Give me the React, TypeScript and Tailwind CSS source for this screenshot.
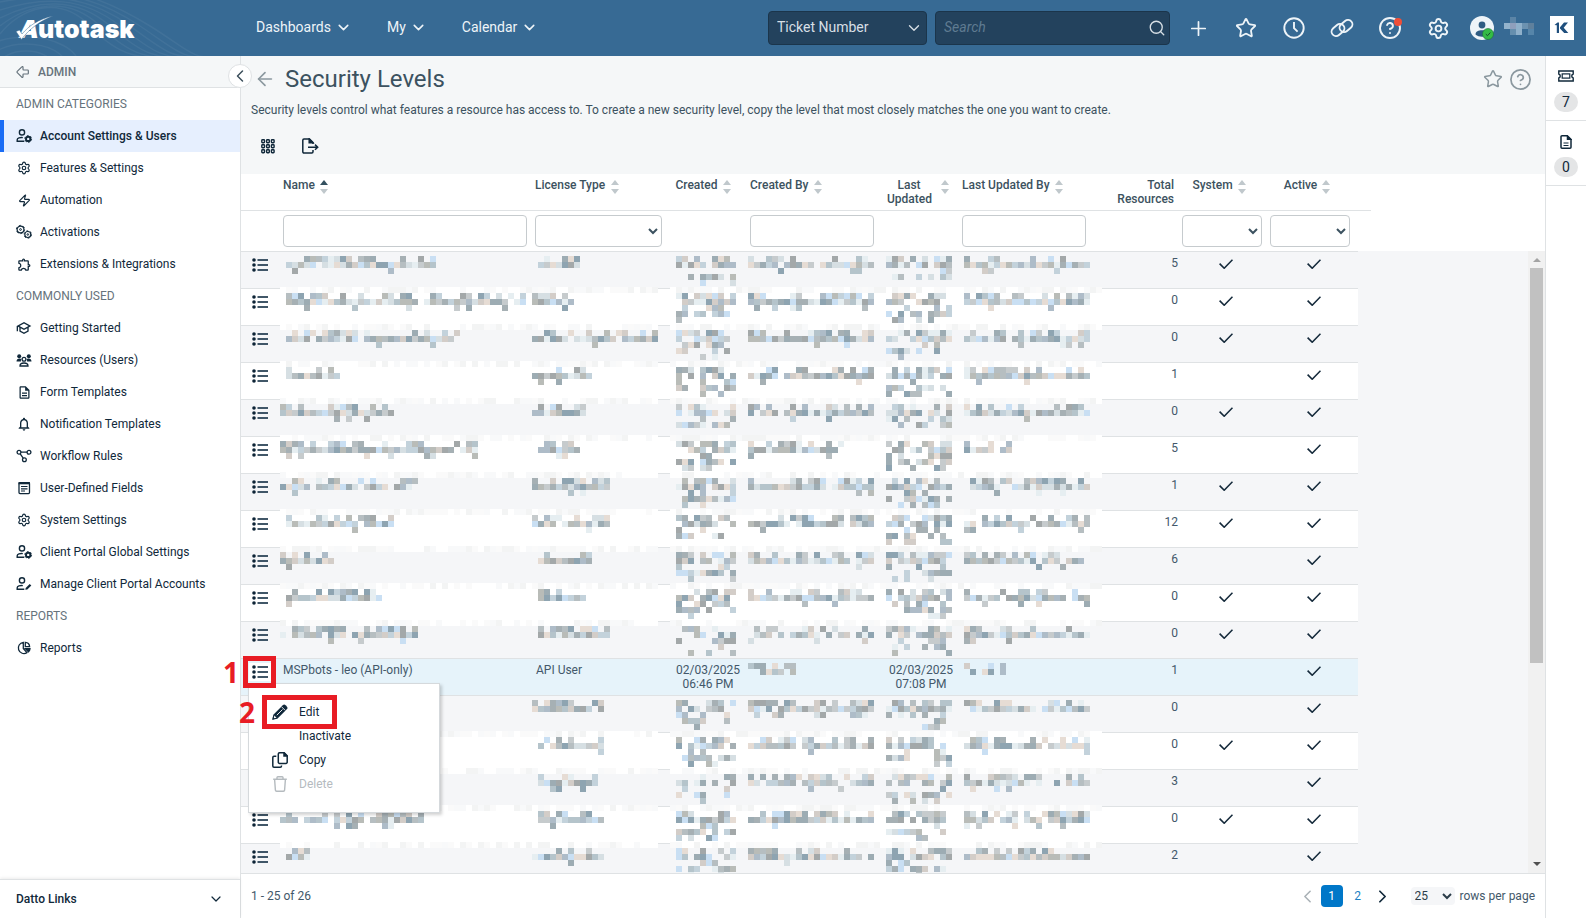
import type { ReactNode } from 'react';
import {
  ArrowBigLeft,
  ArrowLeft,
  ChevronDown,
  ChevronLeft,
  ChevronRight,
  CircleQuestionMark,
  Plus,
  Search,
  Settings,
  Star,
  Zap,
} from 'lucide-react';
import {
  MdNotificationsNone,
  MdOutlineDescription,
  MdOutlineExtension,
  MdOutlineSchool,
} from 'react-icons/md';

/* ---------- icons ---------- */

const GearsIcon = () => (
  <svg viewBox="0 0 16 16" className="size-4 overflow-visible" fill="none" stroke="currentColor">
    <circle cx="4.5" cy="5.5" r="3.4" strokeWidth="1.2" />
    <circle cx="4.5" cy="5.5" r="4.1" strokeWidth="1" strokeDasharray="2.1 2.2" />
    <circle cx="4.5" cy="5.5" r="0.9" />
    <circle cx="11.8" cy="10.5" r="3" strokeWidth="1.2" />
    <circle cx="11.8" cy="10.5" r="3.7" strokeWidth="1" strokeDasharray="1.9 1.97" />
    <circle cx="11.8" cy="10.5" r="0.8" />
  </svg>
);

const UserGearIcon = () => (
  <svg viewBox="0 0 16 16" className="size-4 overflow-visible" fill="none" stroke="currentColor" strokeWidth="1.4">
    <circle cx="6" cy="4.4" r="2.6" />
    <path d="M8.3 13.3H1.2v-1.5c0-1.7 2.8-2.6 5.6-2.2" />
    <circle cx="12.2" cy="10.9" r="2.2" strokeWidth="2" />
    <circle cx="12.2" cy="10.9" r="3.4" strokeWidth="1" strokeDasharray="1.7 1.86" />
  </svg>
);

const PeopleIcon = () => (
  <svg viewBox="0 0 16 16" className="size-4" fill="currentColor">
    <circle cx="3.2" cy="4.2" r="2" />
    <circle cx="12.8" cy="4.2" r="2" />
    <path d="M.5 9.6c0-2 1.2-3 3-3 .8 0 1.5.2 2 .6-.5.7-.8 1.5-.6 2.4zM15.5 9.6c0-2-1.2-3-3-3-.8 0-1.5.2-2 .6.5.7.8 1.5.6 2.4z" />
    <circle cx="8" cy="7.2" r="1.9" fill="none" stroke="currentColor" strokeWidth="1.3" />
    <path d="M4 14c0-2 1.6-3 4-3s4 1 4 3z" fill="none" stroke="currentColor" strokeWidth="1.3" />
  </svg>
);

const WorkflowIcon = () => (
  <svg viewBox="0 0 16 16" className="size-4" fill="none" stroke="currentColor" strokeWidth="1.3">
    <circle cx="3" cy="4.2" r="1.9" />
    <circle cx="13" cy="4.2" r="1.9" />
    <circle cx="8.4" cy="11.8" r="1.9" />
    <path d="M5 4.2h6M4.2 5.8l3 4.4" />
  </svg>
);

const FieldsIcon = () => (
  <svg viewBox="0 0 16 16" className="size-4" fill="none" stroke="currentColor" strokeWidth="1.3">
    <rect x="3" y="2.6" width="10.5" height="11" rx="1" />
    <path d="M2.5 3.2h11.5" strokeWidth="2.2" />
    <path d="M5 6.5h6.5M5 8.8h6.5M5 11h4" strokeWidth="1.2" />
  </svg>
);

const UserEditIcon = () => (
  <svg viewBox="0 0 16 16" className="size-4" fill="none" stroke="currentColor" strokeWidth="1.4">
    <circle cx="6" cy="4.4" r="2.6" />
    <path d="M8.3 13.3H1.2v-1.5c0-1.7 2.8-2.6 5.6-2.2" />
    <path d="M9.3 13.7l.4-1.8 4-4 1.6 1.6-4 4z" fill="currentColor" stroke="none" />
  </svg>
);

const PieIcon = () => (
  <svg viewBox="0 0 16 16" className="size-4" fill="none" stroke="currentColor" strokeWidth="1.3">
    <path d="M7.3 2.4a5.6 5.6 0 1 0 3.6 10.3L7.3 8.5z" />
    <path d="M9.3 2.3v4.3h4.3a4.6 4.6 0 0 0-4.3-4.3z" />
    <path d="M9.3 8.6h4.7a5 5 0 0 1-1.5 3.2z" fill="currentColor" />
  </svg>
);

const GridIcon = () => (
  <svg viewBox="0 0 14 15" className="h-[15px] w-3.5" fill="none" stroke="currentColor" strokeWidth="1.4">
    {[0.8, 5.8, 10.8].map((y) =>
      [0.8, 5.6, 10.4].map((x) => (
        <rect key={`${x}-${y}`} x={x} y={y} width="2.7" height="2.9" rx="0.7" />
      )),
    )}
  </svg>
);

const ExportIcon = () => (
  <svg viewBox="0 0 17 16" className="h-4 w-[17px]" fill="none" stroke="currentColor" strokeWidth="1.5">
    <path d="M11 12v1.8a1.2 1.2 0 0 1-1.2 1.2H2A1.2 1.2 0 0 1 .8 13.8V2.2A1.2 1.2 0 0 1 2 1h5.5L11 4.5v1.500" />
    <path d="M7.2 1v3.7h3.7z" fill="currentColor" />
    <path d="M6 9.2h9.5M13 6.6l2.7 2.6-2.7 2.6" />
  </svg>
);

const LinkIcon = () => (
  <svg viewBox="0 0 24 24" className="size-6 overflow-visible" fill="none" stroke="currentColor" strokeWidth="1.9">
    <rect x="-7" y="-4.5" width="14" height="9" rx="4.5" transform="translate(8 14) rotate(-40)" />
    <rect x="-7" y="-4.5" width="14" height="9" rx="4.5" transform="translate(16 10) rotate(-40)" />
  </svg>
);

const TicketIcon = () => (
  <svg viewBox="0 0 16 12" className="h-3 w-4" fill="none" stroke="currentColor" strokeWidth="1.4">
    <path d="M.8 1h14.4v3a2.1 2.1 0 0 0 0 4v3H.8V8a2.1 2.1 0 0 0 0-4z" />
    <rect x="4.2" y="3.9" width="7.6" height="4.2" strokeWidth="1.2" />
  </svg>
);

const DocIcon = () => (
  <svg viewBox="0 0 12 14" className="h-3.5 w-3" fill="none" stroke="currentColor" strokeWidth="1.5">
    <path d="M1 1.8A1 1 0 0 1 2 .8h5L11 4.6v7.6a1 1 0 0 1-1 1H2a1 1 0 0 1-1-1z" />
    <path d="M7.5 1v3.3h3.3z" fill="currentColor" />
    <path d="M3.5 8h5M3.5 10.5h5" strokeWidth="1.2" />
  </svg>
);

const ListIcon = () => (
  <svg viewBox="0 0 16 14" className="h-3.5 w-4" fill="#0d2436">
    {[2, 7, 12].map((y) => (
      <g key={y}>
        <circle cx="2" cy={y} r="1.8" />
        <rect x="5.5" y={y - 0.9} width="10.5" height="1.8" fill="#2d4558" />
      </g>
    ))}
  </svg>
);

const CheckIcon = () => (
  <svg viewBox="0 0 14 10" className="mx-auto mt-[3px] h-2.5 w-3.5" fill="none" stroke="#14293a" strokeWidth="1.6">
    <path d="M.6 4.6l4.6 4.600L13.5.7" />
  </svg>
);

const PencilIcon = () => (
  <svg viewBox="0 0 16 16" className="size-4" fill="currentColor">
    <path d="M.3 15.7l1-5L10.8 1.3a2 2 0 0 1 2.8 0l1.2 1.2a2 2 0 0 1 0 2.8L5.3 14.7z" />
    <path d="M4.8 11.2l5.7-5.7M9.8 3l3.3 3.3" stroke="#fff" strokeWidth="0.9" />
    <path d="M2.3 11.6l2.2 2.2-2.6.5z" fill="#fff" />
    <path d="M.3 15.7l.6-2.4 1.8 1.8z" />
  </svg>
);

const CopyIcon = () => (
  <svg viewBox="0 0 16 16" className="size-4" fill="none" stroke="currentColor" strokeWidth="1.5">
    <path d="M6.3 2A1.2 1.2 0 0 1 7.5.8h4.7l3 3v6.4a1.2 1.2 0 0 1-1.2 1.2H7.5a1.2 1.2 0 0 1-1.2-1.2z" />
    <path d="M12 1v3h3z" fill="currentColor" />
    <path d="M4.3 4.2H2A1.2 1.2 0 0 0 .8 5.4V14A1.2 1.2 0 0 0 2 15.2h6.3A1.2 1.2 0 0 0 9.5 14v-.6" />
  </svg>
);

const TrashIcon = () => (
  <svg viewBox="0 0 16 16" className="size-4" fill="none" stroke="currentColor" strokeWidth="1.4">
    <path d="M1.2 3.2h13.6M5 3V1.5A.8.8 0 0 1 5.8.7h4.4a.8.8 0 0 1 .8.8V3M2.6 3.4l.8 10.7a1.2 1.2 0 0 0 1.2 1.1h6.8a1.2 1.2 0 0 0 1.2-1.1l.8-10.7" />
  </svg>
);

const Sorter = ({ asc = false }: { asc?: boolean }) => (
  <svg viewBox="0 0 8 14" className="mt-0.5 h-3.5 w-2 shrink-0" fill="#c0c8cc">
    <path d="M0 5l4-5 4 5z" fill={asc ? '#33505f' : '#c0c8cc'} />
    <path d="M0 9l4 5 4-5z" />
  </svg>
);

/* ---------- redacted text ---------- */

const TONES = [
  '#a6b0b4', '#b6bec1', '#c6cbcd', '#aebcc8', '#9dacb3', '#c3d2db', '#d6dfe3', '#c9dff3',
  '#e6dcd4', '#b9bcb8', '#8ea4b1', '#e6eef1', '#d3cdc8', '#b5c4cb', '#a3a8a9',
];
const FAINT = ['#ffffff', '#ffffff', '#fafafa', '#f3f4f4', '#f8f9fa'];

const random = (seed: number) => {
  let s = seed * 7919 + 13;
  return () => {
    s = (s * 1103515245 + 12345) % 2147483648;
    return s / 2147483648;
  };
};

const DENSITY = {
  text: [0.5, 0.94, 0.12],
  date: [0.65, 0.8, 0.3, 0.65, 0.25],
  sparse: [0.5, 0.4],
};

interface IMosaic {
  seed: number;
  from?: number;
  count: number;
  kind?: keyof typeof DENSITY;
  span: number;
  edge?: boolean;
  className: string;
}

// 6px blocks standing in for hidden values; `span` is the cell width in blocks
const Mosaic = ({ seed, from = 0, count, kind = 'text', span, edge = true, className }: IMosaic) => {
  const next = random(seed);
  for (let i = 0; i < 5; i++) next();
  const blocks: ReactNode[] = [];

  if (edge) {
    for (let x = -1; x < span; x++) {
      blocks.push(
        <rect key={`e${x}`} x={x * 6} y={0} width="6" height="6" fill={FAINT[Math.floor(next() * FAINT.length)]} />,
      );
    }
  }
  DENSITY[kind].forEach((density, row) => {
    for (let x = from; x < from + count; x++) {
      const shown = next() < density;
      const tone = TONES[Math.floor(next() * TONES.length)];
      if (shown) {
        blocks.push(<rect key={`${row}-${x}`} x={x * 6} y={6 + row * 6} width="6" height="6" fill={tone} />);
      }
    }
  });

  return (
    <svg
      className={`absolute -top-0.5 h-9 w-full overflow-visible ${className}`}
      shapeRendering="crispEdges"
      aria-hidden="true"
    >
      {blocks}
    </svg>
  );
};

/* ---------- data ---------- */

interface IRow {
  name: [number, number];
  license: [number, number];
  by?: number;
  updatedBy?: number;
  total: number;
  system: boolean;
}

const rows: IRow[] = [
  { name: [0, 25], license: [1, 7], total: 5, system: true },
  { name: [0, 40], license: [0, 8], total: 0, system: true },
  { name: [0, 29], license: [0, 21], total: 0, system: true },
  { name: [0, 9], license: [0, 10], total: 1, system: false },
  { name: [-1, 19], license: [0, 10], total: 0, system: true },
  { name: [-1, 33], license: [1, 7], by: 16, updatedBy: 8, total: 5, system: false },
  { name: [-1, 23], license: [0, 14], total: 1, system: true },
  { name: [0, 18], license: [0, 13], total: 12, system: true },
  { name: [-1, 9], license: [1, 9], total: 6, system: false },
  { name: [0, 16], license: [1, 8], total: 0, system: true },
  { name: [-1, 23], license: [1, 12], total: 0, system: true },
  { name: [0, 0], license: [0, 0], by: 8, updatedBy: 7, total: 1, system: false },
  { name: [0, 10], license: [0, 12], total: 0, system: false },
  { name: [0, 12], license: [1, 11], total: 0, system: true },
  { name: [0, 10], license: [1, 10], total: 3, system: false },
  { name: [-1, 24], license: [1, 11], total: 0, system: true },
  { name: [0, 4], license: [0, 12], total: 2, system: false },
];
const OPEN_ROW = 11;

interface INavItem {
  label: string;
  icon: ReactNode;
}

const sections: { title: string; items: INavItem[] }[] = [
  {
    title: 'ADMIN CATEGORIES',
    items: [
      { label: 'Account Settings & Users', icon: <UserGearIcon /> },
      { label: 'Features & Settings', icon: <Settings size={14} strokeWidth={2} /> },
      { label: 'Automation', icon: <Zap size={13} strokeWidth={2.2} /> },
      { label: 'Activations', icon: <GearsIcon /> },
      { label: 'Extensions & Integrations', icon: <MdOutlineExtension size={15} /> },
    ],
  },
  {
    title: 'COMMONLY USED',
    items: [
      { label: 'Getting Started', icon: <MdOutlineSchool size={16} className="-scale-x-100" /> },
      { label: 'Resources (Users)', icon: <PeopleIcon /> },
      { label: 'Form Templates', icon: <MdOutlineDescription size={15} /> },
      { label: 'Notification Templates', icon: <MdNotificationsNone size={16} /> },
      { label: 'Workflow Rules', icon: <WorkflowIcon /> },
      { label: 'User-Defined Fields', icon: <FieldsIcon /> },
      { label: 'System Settings', icon: <Settings size={14} strokeWidth={2} /> },
      { label: 'Client Portal Global Settings', icon: <UserGearIcon /> },
      { label: 'Manage Client Portal Accounts', icon: <UserEditIcon /> },
    ],
  },
  { title: 'REPORTS', items: [{ label: 'Reports', icon: <PieIcon /> }] },
];

/* ---------- header ---------- */

const Logo = () => (
  <svg viewBox="0 -6 132 40" className="h-10 w-[132px]" fill="#fff" role="img" aria-label="Autotask">
    <text x="3" y="24" fontFamily="Inter, sans-serif" fontWeight="900" fontStyle="italic" fontSize="25">
      A
    </text>
    <text x="22" y="24" fontFamily="Inter, sans-serif" fontWeight="900" fontSize="25">
      utotask
    </text>
    <path d="M0 17.5l3.5-1.5 2.5 4C13 12 22 5 37 2 24 7 13 15 5.5 25.5z" stroke="#376a94" strokeWidth="0.5" />
  </svg>
);

const HeaderWaves = () => (
  <svg
    className="pointer-events-none absolute left-0 top-0 h-full w-[220px]"
    fill="none"
    stroke="#fff"
    strokeOpacity="0.05"
    strokeWidth="1.5"
  >
    {[0, 1, 2, 3, 4, 5, 6].map((i) => (
      <path
        key={i}
        d={`M0 ${34 - i * 8}C${20 + i * 8} ${8 - i * 4} ${60 + i * 8} ${-6 + i} ${90 + i * 10} 26S${140 + i * 8} 58 ${175 + i * 8} 58`}
      />
    ))}
    {[0, 1, 2, 3].map((i) => (
      <ellipse key={i} cx="26" cy="66" rx={14 + i * 13} ry={8 + i * 7} />
    ))}
  </svg>
);

const iconButton = 'flex size-6 items-center justify-center';

const Header = () => (
  <header className="relative flex h-14 shrink-0 items-center bg-[#376a94] pl-4 pr-3 text-sm text-[#eef4f8]">
    <HeaderWaves />
    <div className="relative w-60">
      <Logo />
    </div>
    <nav className="flex items-center gap-[35px] pb-0.5">
      {['Dashboards', 'My', 'Calendar'].map((label) => (
        <button key={label} type="button" className="flex items-center gap-1">
          {label}
          <ChevronDown size={17} strokeWidth={2.2} />
        </button>
      ))}
    </nav>
    <div className="ml-auto flex items-center gap-2">
      <div className="relative">
        <select
          aria-label="Search by"
          className="block h-[34px] w-[159px] appearance-none rounded border border-[#1b354b] bg-[#23425d] px-2 pb-0.5 text-[#d7dfe5]"
        >
          <option>Ticket Number</option>
        </select>
        <ChevronDown
          className="pointer-events-none absolute right-1 top-2 text-[#d7dfe5]"
          size={18}
          strokeWidth={1.8}
        />
      </div>
      <div className="flex h-[34px] w-[235px] items-center rounded border border-[#1b354b] bg-[#23425d] px-[3px] text-[#d7dfe5]">
        <input
          aria-label="Search"
          placeholder="Search"
          className="min-w-0 flex-1 bg-transparent px-[5px] pb-0.5 outline-none placeholder:italic placeholder:text-[#5f7b91]"
        />
        <button type="button" aria-label="Run search">
          <Search size={18} strokeWidth={1.8} />
        </button>
      </div>
    </div>
    <div className="ml-4 flex items-center gap-6">
      <button type="button" aria-label="New" className={iconButton}>
        <Plus size={23} strokeWidth={1.8} />
      </button>
      <button type="button" aria-label="Favorites" className={iconButton}>
        <Star size={22} strokeWidth={2} strokeLinejoin="miter" />
      </button>
      <button type="button" aria-label="Recent" className={iconButton}>
        <svg viewBox="0 0 22 22" className="size-[22px]" fill="none" stroke="currentColor" strokeWidth="1.9">
          <circle cx="11" cy="11" r="9.7" />
          <path d="M11 5v6.2l3.6 3.4" />
        </svg>
      </button>
      <button type="button" aria-label="Links" className={iconButton}>
        <LinkIcon />
      </button>
      <button type="button" aria-label="Help" className={`relative ${iconButton}`}>
        <CircleQuestionMark size={24} strokeWidth={1.9} />
        <span className="absolute right-0 top-0.5 size-2 rounded-full bg-[#f04e37]" />
      </button>
      <button type="button" aria-label="Settings" className={iconButton}>
        <Settings size={23} strokeWidth={2} />
      </button>
    </div>
    <div className="ml-5 flex items-center">
      <button type="button" aria-label="Profile" className="relative size-6">
        <svg viewBox="0 0 24 24" className="size-6 overflow-visible">
          <circle cx="12" cy="12" r="12" fill="#eef4f8" />
          <circle cx="12" cy="9" r="3.4" fill="#2f5c82" />
          <path d="M5.5 18.5c0-3 3-4.3 6.5-4.3s6.5 1.3 6.5 4.3c-3.5 3-9.5 3-13 0z" fill="#2f5c82" />
          <circle cx="18" cy="18" r="5.5" fill="#34bb45" stroke="#1f6d3a" strokeWidth="0.6" />
          <path d="M15.8 18.1l1.7 1.6 2.8-3.1" fill="none" stroke="#17492a" />
        </svg>
      </button>
      <svg viewBox="0 0 30 18" className="mb-1 ml-2.5 h-[18px] w-[30px]" shapeRendering="crispEdges" aria-hidden="true">
        <rect x="0" y="6" width="6" height="6" fill="#93b3cc" />
        <rect x="6" y="0" width="6" height="6" fill="#5b84a6" />
        <rect x="6" y="6" width="6" height="6" fill="#8f9fbc" />
        <rect x="6" y="12" width="6" height="6" fill="#668fae" />
        <rect x="12" y="6" width="6" height="12" fill="#8fb0ca" />
        <rect x="18" y="6" width="6" height="6" fill="#6c92b0" />
        <rect x="24" y="6" width="6" height="6" fill="#5f809c" />
        <rect x="24" y="12" width="6" height="6" fill="#5685a9" />
      </svg>
      <svg viewBox="0 0 24 24" className="ml-4 size-6" role="img" aria-label="Kaseya One">
        <rect width="24" height="24" fill="#fff" />
        <path d="M4.5 9l3-2.5H9V17H6.8V9.2zM10 11.2L14 6.5h4L13.7 11.7 18.3 17h-4.1L10 12.5z" fill="#1f4f7d" />
      </svg>
    </div>
  </header>
);

/* ---------- sidebar ---------- */

const Sidebar = () => (
  <aside className="relative flex w-[241px] shrink-0 flex-col border-r border-[#dfe2e4] bg-white text-xs text-[#10283a]">
    <a
      href="#admin"
      className="flex h-8 items-center gap-[7px] border-b border-[#dfe2e4] bg-[#f5f7f8] pl-[15px] font-medium text-[#66737c]"
    >
      <ArrowBigLeft size={16} strokeWidth={1.8} />
      ADMIN
    </a>
    <button
      type="button"
      aria-label="Collapse menu"
      className="absolute -right-3 top-2 z-10 flex size-6 items-center justify-center rounded-full border border-[#dfe2e4] bg-white text-[#3c4f5b]"
    >
      <ChevronLeft size={20} strokeWidth={1.8} />
    </button>
    <nav className="flex-1">
      {sections.map(({ title, items }) => (
        <div key={title}>
          <h2 className="flex h-8 items-center pl-4 text-[#66737c]">{title}</h2>
          <ul>
            {items.map(({ label, icon }, index) => {
              const active = title === 'ADMIN CATEGORIES' && index === 0;
              return (
                <li key={label}>
                  <a
                    href="#category"
                    className={`flex h-8 items-center gap-2 border-l-4 pl-3 ${
                      active ? 'border-[#1a6cf5] bg-[#e6effe] font-medium' : 'border-transparent'
                    }`}
                  >
                    <span className="flex size-4 items-center justify-center">{icon}</span>
                    {label}
                  </a>
                </li>
              );
            })}
          </ul>
        </div>
      ))}
    </nav>
    <button
      type="button"
      className="flex h-[39px] items-center justify-between border-t border-[#dfe2e4] px-4 font-medium shadow-[0_-1px_3px_rgba(0,0,0,0.08)]"
    >
      Datto Links
      <ChevronDown size={16} strokeWidth={1.8} />
    </button>
  </aside>
);

/* ---------- grid ---------- */

const filterBox = 'block h-8 w-full rounded border border-[#c6cbce] bg-white';

const GridHead = () => (
  <table className="w-[1130px] table-fixed text-xs leading-[14px] text-[#3c5260]">
    <colgroup>
      <col className="w-[38px]" />
      <col className="w-[252px]" />
      <col className="w-[135px]" />
      <col className="w-20" />
      <col className="w-[132px]" />
      <col className="w-20" />
      <col className="w-[132px]" />
      <col className="w-[88px]" />
      <col className="w-[88px]" />
      <col className="w-[88px]" />
      <col className="w-[17px]" />
    </colgroup>
    <thead>
      <tr className="h-9 border-b border-[#dfe2e4] align-top [&>th]:px-1 [&>th]:pt-1 [&>th]:font-medium">
        <th />
        <th>
          <div className="flex gap-[5px]">
            Name <Sorter asc />
          </div>
        </th>
        <th>
          <div className="flex gap-1.5">
            License Type <Sorter />
          </div>
        </th>
        <th>
          <div className="flex justify-center gap-[5px] pr-1.5">
            Created <Sorter />
          </div>
        </th>
        <th>
          <div className="flex gap-1.5">
            Created By <Sorter />
          </div>
        </th>
        <th>
          <div className="flex justify-center gap-2.5">
            <span className="w-11">Last Updated</span> <Sorter />
          </div>
        </th>
        <th>
          <div className="flex gap-[5px]">
            Last Updated By <Sorter />
          </div>
        </th>
        <th className="text-right">
          Total
          <br />
          Resources
        </th>
        <th>
          <div className="flex justify-center gap-[5px] pr-1.5">
            System <Sorter />
          </div>
        </th>
        <th>
          <div className="flex justify-center gap-[5px] pr-1.5">
            Active <Sorter />
          </div>
        </th>
        <th />
      </tr>
      <tr className="h-[41px] [&>td]:px-1">
        <td />
        <td>
          <input aria-label="Filter by name" className={filterBox} />
        </td>
        <td>
          <select aria-label="Filter by license type" className={filterBox} />
        </td>
        <td />
        <td>
          <input aria-label="Filter by creator" className={filterBox} />
        </td>
        <td />
        <td>
          <input aria-label="Filter by last editor" className={filterBox} />
        </td>
        <td />
        <td>
          <select aria-label="Filter by system" className={filterBox} />
        </td>
        <td>
          <select aria-label="Filter by active" className={filterBox} />
        </td>
        <td />
      </tr>
    </thead>
  </table>
);

const RowMenu = () => (
  <div className="absolute left-[7px] top-6 z-20 flex h-[130px] w-48 flex-col border border-[#d5d9dc] bg-white py-4 text-[#10283a] shadow-[2px_2px_3px_rgba(0,0,0,0.18)]">
    {[
      { label: 'Edit', icon: <PencilIcon /> },
      { label: 'Inactivate', icon: null },
      { label: 'Copy', icon: <CopyIcon /> },
      { label: 'Delete', icon: <TrashIcon />, disabled: true },
    ].map(({ label, icon, disabled }) => (
      <button
        key={label}
        type="button"
        disabled={disabled}
        className="flex h-6 items-center gap-[11px] pl-[23px] disabled:text-[#b5bbbf]"
      >
        <span className="size-4">{icon}</span>
        {label}
      </button>
    ))}
  </div>
);

const GridRow = ({ row, index }: { row: IRow; index: number }) => {
  const open = index === OPEN_ROW;
  // the row after the open one keeps its divider visible
  const edge = !open && index !== OPEN_ROW + 1 && index !== 0;
  const kind = open ? 'sparse' : 'text';
  const seed = index * 10 + 1;

  return (
    <tr
      className={`h-[37px] border-b border-[#dfe2e4] align-top [&>td]:relative [&>td]:px-1 [&>td]:pt-1 ${
        open ? 'bg-[#e6f3fa]' : index % 2 ? 'bg-white' : 'bg-[#f5f6f8]'
      }`}
    >
      <td>
        <button
          type="button"
          aria-label="Row actions"
          className={`ml-1 block px-[3px] py-0.5 ${open ? 'bg-white' : ''}`}
        >
          <ListIcon />
        </button>
        {open && <RowMenu />}
      </td>
      {open ? (
        <>
          <td>MSPbots - leo (API-only)</td>
          <td>API User</td>
          <td className="text-center">
            02/03/2025
            <br />
            06:46 PM
          </td>
        </>
      ) : (
        <>
          <td>
            <Mosaic className="left-[7px]" seed={seed} from={row.name[0]} count={row.name[1]} span={42} edge={edge} />
          </td>
          <td>
            <Mosaic
              className="left-0"
              seed={seed + 1}
              from={row.license[0]}
              count={row.license[1]}
              span={21}
              edge={edge}
            />
          </td>
          <td>
            <Mosaic className="left-2" seed={seed + 2} count={10} kind="date" span={12} edge={edge} />
          </td>
        </>
      )}
      <td>
        <Mosaic className="left-0" seed={seed + 3} count={row.by ?? 21} kind={kind} span={22} edge={edge} />
      </td>
      {open ? (
        <td className="text-center">
          02/03/2025
          <br />
          07:08 PM
        </td>
      ) : (
        <td>
          <Mosaic className="left-[5px]" seed={seed + 4} count={11} kind="date" span={13} edge={edge} />
        </td>
      )}
      <td>
        <Mosaic className="left-[3px]" seed={seed + 5} count={row.updatedBy ?? 21} kind={kind} span={23} edge={edge} />
      </td>
      <td className="text-right">{row.total}</td>
      <td>{row.system && <CheckIcon />}</td>
      <td>
        <CheckIcon />
      </td>
    </tr>
  );
};

const GridBody = () => (
  <div className="flex min-h-0 flex-1 border-b border-[#dfe2e4] bg-[#f5f6f8]">
    <div className="min-w-0 flex-1 overflow-hidden">
      <table className="w-[1117px] table-fixed border-t border-[#dfe2e4] text-xs leading-[14px] text-[#43586a]">
        <colgroup>
          <col className="w-[38px]" />
          <col className="w-[253px]" />
          <col className="w-[136px]" />
          <col className="w-20" />
          <col className="w-[133px]" />
          <col className="w-20" />
          <col className="w-[133px]" />
          <col className="w-[88px]" />
          <col className="w-[88px]" />
          <col className="w-[88px]" />
        </colgroup>
        <tbody>
          {rows.map((row, index) => (
            <GridRow key={index} row={row} index={index} />
          ))}
        </tbody>
      </table>
    </div>
    <div className="flex w-[17px] flex-col items-center bg-[#f1f1f1] pb-[7px] pt-[7px]" aria-hidden="true">
      <svg viewBox="0 0 8 4" className="h-1 w-2" fill="#a3a3a3">
        <path d="M0 4l4-4 4 4z" />
      </svg>
      <div className="mt-1.5 h-[395px] w-[13px] bg-[#c1c1c1]" />
      <svg viewBox="0 0 8 4" className="mt-auto h-1 w-2" fill="#505050">
        <path d="M0 0l4 4 4-4z" />
      </svg>
    </div>
  </div>
);

const Pagination = () => (
  <footer className="flex h-11 shrink-0 items-center bg-white px-2.5 text-xs text-[#43586a]">
    <span>1 - 25 of 26</span>
    <div className="ml-auto flex items-center">
      <button type="button" aria-label="Previous page" disabled className="text-[#a9b1b6]">
        <ChevronLeft size={21} strokeWidth={1.8} />
      </button>
      <button type="button" className="ml-[3px] size-[22px] rounded bg-[#0077c8] text-white">
        1
      </button>
      <button type="button" className="ml-1 size-[22px] text-[#1b7fc4]">
        2
      </button>
      <button type="button" aria-label="Next page" className="ml-[3px] text-[#10283a]">
        <ChevronRight size={21} strokeWidth={2} />
      </button>
      <label className="ml-[18px] flex items-center gap-[5px]">
        <select defaultValue="25" className="h-[18px] w-11 rounded bg-[#f5f6f8] text-[#2b3d49]">
          <option>25</option>
          <option>50</option>
        </select>
        rows per page
      </label>
    </div>
  </footer>
);

/* ---------- page ---------- */

const RightRail = () => (
  <aside className="flex w-10 shrink-0 flex-col bg-white text-sm text-[#10283a]">
    {[
      { label: 'Open tickets', icon: <TicketIcon />, count: 7 },
      { label: 'Open documents', icon: <DocIcon />, count: 0 },
    ].map(({ label, icon, count }) => (
      <button
        key={label}
        type="button"
        aria-label={label}
        className="flex h-[65px] flex-col items-center justify-between border-b border-[#dfe2e4] pb-2 pt-3.5"
      >
        {icon}
        <span className="h-5 w-6 rounded-full bg-[#e4e5e6] leading-5">{count}</span>
      </button>
    ))}
  </aside>
);

const Callouts = () => (
  <div className="pointer-events-none absolute left-0 top-0 z-30 font-['Open_Sans',sans-serif] text-[28px] font-bold leading-none text-[#e81c24]">
    <span className="absolute left-[223px] top-[658px]">1</span>
    <span className="absolute left-[243px] top-[656px] h-8 w-[33px] border-[5px] border-[#e81c24]" />
    <span className="absolute left-[239px] top-[698px]">2</span>
    <span className="absolute left-[262px] top-[695px] h-[34px] w-[75px] border-[5px] border-[#e81c24]" />
  </div>
);

export default function App() {
  return (
    <div className="relative flex h-screen flex-col overflow-hidden bg-white font-[Roboto,sans-serif]">
      <Header />
      <div className="flex min-h-0 flex-1">
        <Sidebar />
        <main className="flex min-w-0 flex-1 flex-col border-r border-[#dfe2e4] bg-[#f5f7f8]">
          <div className="flex h-[46px] shrink-0 items-center px-[13px] text-[#8b989f]">
            <button type="button" aria-label="Back">
              <ArrowLeft size={22} strokeWidth={1.8} />
            </button>
            <h1 className="ml-[9px] flex-1 text-2xl text-[#3c5260]">Security Levels</h1>
            <button type="button" aria-label="Add to favorites">
              <Star size={20} strokeWidth={1.8} strokeLinejoin="miter" />
            </button>
            <button type="button" aria-label="Page help" className="ml-1.5">
              <CircleQuestionMark size={23} strokeWidth={1.8} />
            </button>
          </div>
          <p className="px-2.5 text-xs text-[#3c5260]">
            Security levels control what features a resource has access to. To create a new security level, copy the
            level that most closely matches the one you want to create.
          </p>
          <div className="flex h-14 shrink-0 items-center gap-[27px] pl-5 text-[#10283a]">
            <button type="button" aria-label="Choose columns">
              <GridIcon />
            </button>
            <button type="button" aria-label="Export">
              <ExportIcon />
            </button>
          </div>
          <div className="bg-white">
            <GridHead />
          </div>
          <GridBody />
          <Pagination />
        </main>
        <RightRail />
      </div>
      <Callouts />
    </div>
  );
}
